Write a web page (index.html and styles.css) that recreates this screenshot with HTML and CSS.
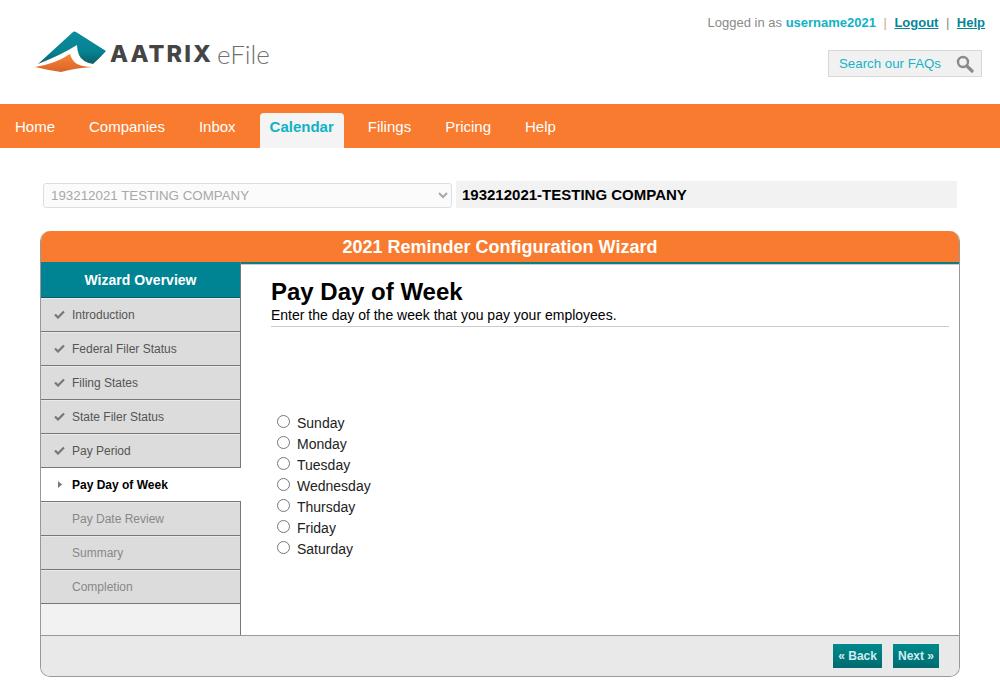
FILE: index.html
```html
<!DOCTYPE html>
<html lang="en">
<head>
<meta charset="utf-8">
<title>2021 Reminder Configuration Wizard</title>
<link rel="stylesheet" href="styles.css">
</head>
<body>
<header class="top">
  <div class="logo">
    <svg class="logo-mark" width="74" height="42" viewBox="0 0 74 42">
      <defs>
        <linearGradient id="teal" x1="0" y1="0" x2="0" y2="1"><stop offset="0" stop-color="#0f8c9c"/><stop offset="0.6" stop-color="#058393"/><stop offset="1" stop-color="#0e5f66"/></linearGradient>
        <linearGradient id="org" x1="0" y1="0" x2="0" y2="1"><stop offset="0" stop-color="#f98433"/><stop offset="1" stop-color="#d8642a"/></linearGradient>
      </defs>
      <path d="M3 33 L38 1 Q39 0 41 1 L71 20 Q64 28 58 33 Q47 31 44 24 Q42 19 42 14 Q26 24 3 33Z" fill="url(#teal)"/>
      <path d="M0 36 Q20 33 35 23 Q37 30 42 33 Q48 36 58 36 Q40 37 26 41 Q12 39 0 36Z" fill="url(#org)"/>
    </svg>
    <span class="brand">AATRIX</span><span class="efile">eFile</span>
  </div>
  <div class="account">
    <p class="login">Logged in as <b class="user">username2021</b><span class="sep sep-o">|</span><a href="#">Logout</a><span class="sep">|</span><a href="#">Help</a></p>
    <div class="search">
      <span>Search our FAQs</span>
      <svg width="18" height="18" viewBox="0 0 18 18"><circle cx="7" cy="7" r="5" fill="none" stroke="#8a8a8a" stroke-width="2.400"/><path d="M10.800 10.800 L16 16" stroke="#8a8a8a" stroke-width="3.200" stroke-linecap="round"/></svg>
    </div>
  </div>
</header>
<nav class="nav">
  <a href="#">Home</a><a href="#">Companies</a><a href="#">Inbox</a><a href="#" class="active">Calendar</a><a href="#">Filings</a><a href="#">Pricing</a><a href="#">Help</a>
</nav>
<main class="main">
  <div class="company">
    <select class="company-select" disabled><option>193212021 TESTING COMPANY</option></select>
    <div class="company-name">193212021-TESTING COMPANY</div>
  </div>
  <section class="wizard">
    <h1 class="wizard-title">2021 Reminder Configuration Wizard</h1>
    <div class="wizard-body">
      <aside class="side">
        <h2 class="side-head">Wizard Overview</h2>
        <ul class="steps">
          <li class="step done"><svg class="check" width="11" height="9" viewBox="0 0 11 9"><path d="M1 4.500 L4 7.500 L10 1.500" fill="none" stroke="#777" stroke-width="2.200"/></svg>Introduction</li>
          <li class="step done"><svg class="check" width="11" height="9" viewBox="0 0 11 9"><path d="M1 4.500 L4 7.500 L10 1.500" fill="none" stroke="#777" stroke-width="2.200"/></svg>Federal Filer Status</li>
          <li class="step done"><svg class="check" width="11" height="9" viewBox="0 0 11 9"><path d="M1 4.500 L4 7.500 L10 1.500" fill="none" stroke="#777" stroke-width="2.200"/></svg>Filing States</li>
          <li class="step done"><svg class="check" width="11" height="9" viewBox="0 0 11 9"><path d="M1 4.500 L4 7.500 L10 1.500" fill="none" stroke="#777" stroke-width="2.200"/></svg>State Filer Status</li>
          <li class="step done"><svg class="check" width="11" height="9" viewBox="0 0 11 9"><path d="M1 4.500 L4 7.500 L10 1.500" fill="none" stroke="#777" stroke-width="2.200"/></svg>Pay Period</li>
          <li class="step current"><svg class="arrow" width="11" height="9" viewBox="0 0 11 9"><path d="M4 1 L8 4.500 L4 8Z" fill="#777"/></svg>Pay Day of Week</li>
          <li class="step todo">Pay Date Review</li>
          <li class="step todo">Summary</li>
          <li class="step todo">Completion</li>
        </ul>
      </aside>
      <div class="content">
        <h2 class="page-title">Pay Day of Week</h2>
        <p class="page-sub">Enter the day of the week that you pay your employees.</p>
        <form class="days">
          <label class="day"><input type="radio" name="d">Sunday</label>
          <label class="day"><input type="radio" name="d">Monday</label>
          <label class="day"><input type="radio" name="d">Tuesday</label>
          <label class="day"><input type="radio" name="d">Wednesday</label>
          <label class="day"><input type="radio" name="d">Thursday</label>
          <label class="day"><input type="radio" name="d">Friday</label>
          <label class="day"><input type="radio" name="d">Saturday</label>
        </form>
      </div>
    </div>
    <footer class="wizard-foot">
      <a href="#" class="btn">« Back</a>
      <a href="#" class="btn">Next »</a>
    </footer>
  </section>
</main>
</body>
</html>
```
FILE: styles.css
```css
* { box-sizing: border-box; }
html, body { margin: 0; padding: 0; }
body { font-family: "Liberation Sans", Arial, sans-serif; font-size: 14px; color: #000; background: #fff; height: 697px; overflow: hidden; }
.top { height: 104px; display: flex; justify-content: space-between; }
.logo { display: flex; align-items: flex-start; padding: 31px 0 0 35px; }
.logo-mark { margin-right: 1px; }
.brand { font-family: Inter, sans-serif; font-weight: 800; font-size: 23.500px; line-height: 28px; margin-top: 9px; color: #454545; letter-spacing: 2.100px; }
.efile { font-family: Lato, sans-serif; font-weight: 300; font-size: 26px; line-height: 28px; margin: 9px 0 0 4px; color: #6f6f6f; }
.account { display: flex; flex-direction: column; align-items: flex-end; padding: 15px 15px 0 0; }
.login { margin: 0; font-size: 13px; line-height: 16px; color: #8a8a8a; }
.user { color: #0fb2c6; }
.login a { color: #05869a; font-weight: 700; text-decoration: underline; }
.sep { margin: 0 7.500px; color: #8a8a8a; }
.sep-o { color: #d0a888; }
.search { margin: 19px 3px 0 0; width: 154px; height: 27px; background: #f1f1f1; border: 1px solid #d8d8d8; display: flex; align-items: center; justify-content: space-between; padding: 0 7px 0 10px; color: #15b4c8; font-size: 13.300px; }
.nav { height: 44px; background: #f97b2f; display: flex; align-items: flex-end; padding-left: 5px; }
.nav a { height: 35px; padding: 0 10px; margin-right: 14px; color: #fff; text-decoration: none; font-size: 15px; line-height: 28px; border-radius: 4px 4px 0 0; }
.nav a.active { background: #f4f4f4; color: #0fb2c6; font-weight: 700; }
.main { padding: 33px 40px 0; }
.company { display: flex; align-items: flex-end; padding-left: 3px; gap: 4px; height: 27px; width: 917px; }
.company-select { width: 409px; height: 25px; padding: 0 3px; font-family: "Liberation Sans", Arial, sans-serif; font-size: 13.333px; color: #a8a8a8; background: #fbfbfb; border: 1px solid #dedede; border-radius: 3px; opacity: 1; }
.company-name { flex: 1; height: 27px; background: #f2f2f2; font-weight: 700; font-size: 15px; line-height: 27px; padding-left: 6px; }
.wizard { margin-top: 23px; width: 920px; height: 446px; border: 1px solid #999; border-top: none; border-radius: 10px; display: flex; flex-direction: column; overflow: hidden; }
.wizard-title { margin: 0 -1px; height: 33px; flex: none; background: #f97b2f; border-bottom: 2px solid #0b7f80; color: #fff; font-size: 18px; line-height: 33px; text-align: center; box-shadow: 0 1px 0 #ccc; }
.wizard-body { flex: 1; display: flex; min-height: 0; }
.side { width: 200px; flex: none; background: #f2f2f2; border-right: 1px solid #777; margin-top: -2px; }
.side-head { margin: 0; height: 36px; background: #008493; border-bottom: 1px solid #0b5a5f; color: #fff; font-size: 14px; line-height: 36px; text-align: center; }
.steps { list-style: none; margin: 0; padding: 0; }
.step { height: 34px; border-bottom: 1px solid #777; border-top: 1px solid #eaeaea; background: #dcdcdc; font-size: 12px; line-height: 33px; padding-left: 31px; position: relative; color: #555; }
.check, .arrow { position: absolute; left: 13px; top: 11px; }
.step.current { background: #fff; color: #000; font-weight: 700; margin-right: -1px; border-top-color: #fff; }
.step.todo { color: #888; }
.content { flex: 1; padding: 13px 10px 0 30px; min-width: 0; }
.page-title { margin: 0; font-size: 24px; line-height: 30px; }
.page-sub { margin: 0; height: 20px; line-height: 16px; font-size: 14px; border-bottom: 1px solid #ccc; }
.days { margin-top: 85px; display: flex; flex-direction: column; }
.day { display: flex; align-items: center; height: 21px; font-size: 14px; color: #222; padding-top: 1px; }
.day input { margin: 0 7px 4px 6px; width: 13px; height: 13px; flex: none; }
.wizard-foot { height: 41px; flex: none; background: #e9e9e9; border-top: 1px solid #999; display: flex; justify-content: flex-end; align-items: center; gap: 11px; padding: 0 20px 0 0; }
.btn { height: 24px; line-height: 24px; padding: 0 5px; background: linear-gradient(#008a8c, #006a70); color: #cfeef0; font-weight: 700; font-size: 12px; text-decoration: none; }
```
